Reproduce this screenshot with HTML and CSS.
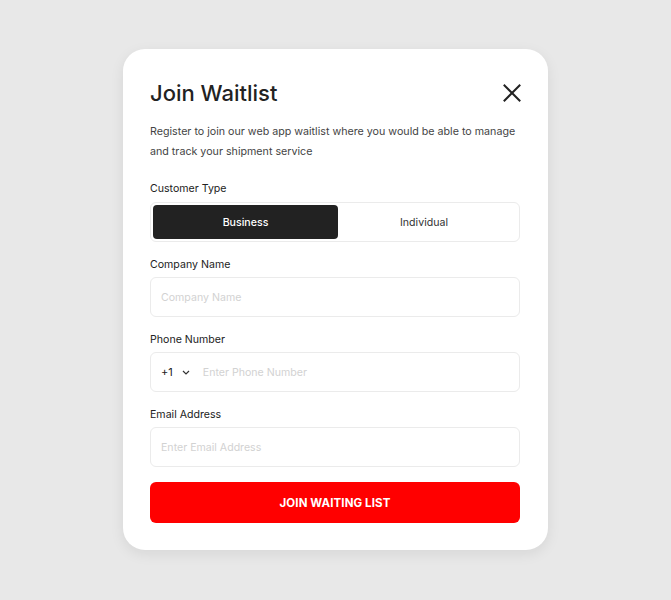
FILE: index.html
```html
<!DOCTYPE html>
<html lang="en">
<head>
<meta charset="utf-8">
<title>Join Waitlist</title>
<link rel="stylesheet" href="styles.css">
</head>
<body>
<div class="page">
  <div class="card">
    <div class="header">
      <h1 class="title">Join Waitlist</h1>
      <button class="close" aria-label="Close">
        <svg width="18" height="18" viewBox="0 0 18 18"><path d="M1.5 1.5 L16.5 16.5 M16.5 1.5 L1.5 16.5" stroke="#222" stroke-width="2" fill="none" stroke-linecap="square"/></svg>
      </button>
    </div>
    <p class="desc">Register to join our web app waitlist where you would be able to manage and track your shipment service</p>

    <div class="field first">
      <div class="label">Customer Type</div>
      <div class="segment">
        <div class="seg active">Business</div>
        <div class="seg">Individual</div>
      </div>
    </div>

    <div class="field">
      <div class="label">Company Name</div>
      <div class="input"><span class="ph">Company Name</span></div>
    </div>

    <div class="field">
      <div class="label">Phone Number</div>
      <div class="input">
        <span class="code">+1</span>
        <svg class="chev" width="8" height="5" viewBox="0 0 8 5"><path d="M1 1 L4 4 L7 1" stroke="#333" stroke-width="1.2" fill="none"/></svg>
        <span class="ph">Enter Phone Number</span>
      </div>
    </div>

    <div class="field">
      <div class="label">Email Address</div>
      <div class="input"><span class="ph">Enter Email Address</span></div>
    </div>

    <button class="submit">JOIN WAITING LIST</button>
  </div>
</div>
</body>
</html>
```
FILE: styles.css
```css
* { box-sizing: border-box; }
html, body { margin: 0; padding: 0; }
body {
  background: #e8e8e8;
  font-family: Inter, "Noto Sans", "Liberation Sans", sans-serif;
  color: #222;
}
.page {
  width: 671px;
  height: 600px;
  padding-top: 49px;
  display: flex;
  justify-content: center;
  align-items: flex-start;
}
.card {
  width: 425px;
  height: 501px;
  background: #fff;
  border-radius: 22px;
  box-shadow: 0 4px 14px rgba(0,0,0,0.08);
  padding: 28px 28px 27px 27px;
  display: flex;
  flex-direction: column;
}
.header {
  display: flex;
  justify-content: space-between;
  align-items: center;
  height: 32px;
}
.title {
  margin: 0;
  font-size: 22px;
  font-weight: 500;
  line-height: 32px;
  color: #222;
  letter-spacing: 0;
}
.close {
  border: 0;
  background: none;
  padding: 0;
  width: 18px;
  height: 18px;
  margin-right: -1px;
  display: flex;
}
.desc {
  margin: 13px 0 0;
  font-size: 10.7px;
  line-height: 20px;
  color: #444;
}
.field {
  display: flex;
  flex-direction: column;
  gap: 4px;
  margin-top: 15px;
}
.field.first { margin-top: 19px; gap: 5px; }
.label {
  font-size: 10.6px;
  line-height: 16px;
  color: #222;
}
.segment {
  height: 40px;
  border: 1px solid #ebebeb;
  border-radius: 6px;
  padding: 2px;
  display: flex;
}
.seg {
  flex: 1;
  display: flex;
  align-items: center;
  justify-content: center;
  font-size: 10.6px;
  color: #333;
  border-radius: 4px;
  padding-right: 7px;
}
.seg.active {
  flex: 0 0 185px;
  padding-right: 0;
  background: #222;
  color: #fff;
  font-weight: 500;
}
.input {
  height: 40px;
  border: 1px solid #ebebeb;
  border-radius: 6px;
  display: flex;
  align-items: center;
  padding-left: 10px;
  font-size: 10.6px;
}
.ph { color: #d2d2d2; }
.code { color: #222; font-size: 11px; }
.chev { margin-left: 9px; margin-right: 13px; }
.submit {
  margin-top: 15px;
  height: 41px;
  border: 0;
  border-radius: 6px;
  background: #ff0000;
  color: #fff;
  font-family: inherit;
  font-size: 11.5px;
  font-weight: 700;
  letter-spacing: 0.1px;
}
```
